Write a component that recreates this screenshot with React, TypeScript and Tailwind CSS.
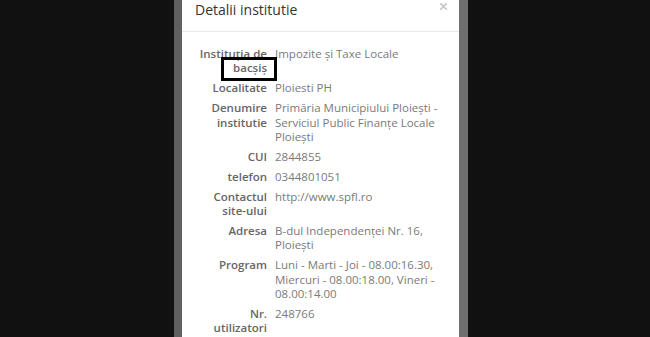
const rows: { label: string[]; value: string[] }[] = [
  { label: ['Instituția de', 'bacșiș'], value: ['Impozite și Taxe Locale'] },
  { label: ['Localitate'], value: ['Ploiesti PH'] },
  {
    label: ['Denumire', 'institutie'],
    value: ['Primăria Municipiului Ploiești -', 'Serviciul Public Finanțe Locale', 'Ploiești'],
  },
  { label: ['CUI'], value: ['2844855'] },
  { label: ['telefon'], value: ['0344801051'] },
  { label: ['Contactul', 'site-ului'], value: ['http://www.spfl.ro'] },
  { label: ['Adresa'], value: ['B-dul Independenței Nr. 16,', 'Ploiești'] },
  {
    label: ['Program'],
    value: ['Luni - Marti - Joi - 08.00:16.30,', 'Miercuri - 08.00:18.00, Vineri -', '08.00:14.00'],
  },
  { label: ['Nr.', 'utilizatori'], value: ['248766'] },
];

export default function App() {
  return (
    <div
      className="w-[650px] h-[337px] overflow-hidden bg-[#111111] flex pl-[174px]"
      style={{ fontFamily: '"Open Sans", "Noto Sans", sans-serif' }}
    >
      {/* ecran telefon cu fundal modal */}
      <div className="w-[294px] h-full flex bg-gradient-to-r from-[#5f5f5f] via-[#8a8a8a] to-[#6e6e6e] pl-[8px] pr-[9px]">
        <div className="relative flex-1 bg-white">
          {/* header */}
          <div className="flex items-start justify-between border-b border-[#e9e9e9] h-[32px] pl-[13px] pr-[12px]">
            <h2 className="text-[14px] leading-[20px] text-[#333333] font-normal">Detalii institutie</h2>
            <svg className="mt-[3px]" width="7" height="7" viewBox="0 0 7 7">
              <path d="M0.5 0.5 L6.5 6.5 M6.5 0.5 L0.5 6.5" stroke="#c8c8c8" strokeWidth="1.6" strokeLinecap="round" />
            </svg>
          </div>

          {/* body */}
          <div className="flex flex-col gap-y-[5.7px] pt-[15px] pl-[16px] text-[11.5px] leading-[14.3px]">
            {rows.map((r, i) => (
              <div key={i} className="flex gap-[8px]">
                <div className="w-[69px] shrink-0 text-right font-semibold text-[#666666] whitespace-nowrap">
                  {r.label.map((l, j) => (
                    <div key={j}>{l}</div>
                  ))}
                </div>
                <div className="text-[#7a7a7a] whitespace-nowrap">
                  {r.value.map((v, j) => (
                    <div key={j}>{v}</div>
                  ))}
                </div>
              </div>
            ))}
          </div>

          {/* chenar de adnotare */}
          <div className="absolute left-[39px] top-[57px] w-[56px] h-[24px] border-[3px] border-black" />
        </div>
      </div>
    </div>
  );
}
